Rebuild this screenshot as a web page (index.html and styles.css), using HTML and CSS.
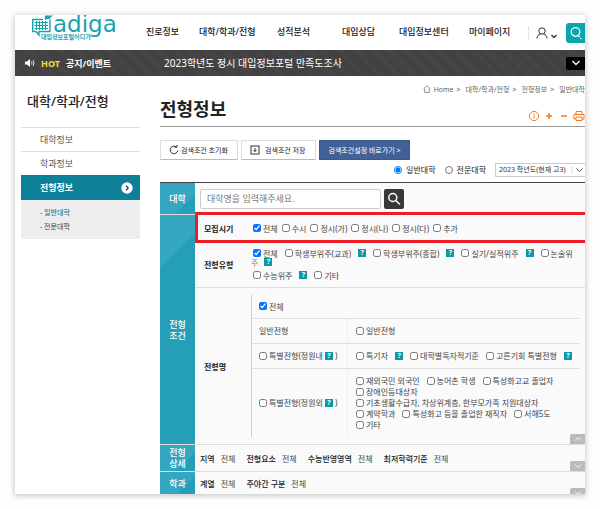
FILE: index.html
```html
<!DOCTYPE html>
<html lang="ko">
<head>
  <meta charset="UTF-8">
  <meta name="viewport" content="width=device-width, initial-scale=1">
  <title>전형정보</title>
  <link rel="stylesheet" href="styles.css">
</head>
<body>
  <div class="page">
    <header class="header">
      <a href="#" class="logo">
        <svg class="logo-mark" viewBox="0 0 22 22" width="22" height="22" fill="none" stroke="#1aa3ad">
          <path d="M12 4.500H1.700V16.500h3.300l3 3.500v-3.500h11V4.500" stroke-width="1.400"/>
          <path d="M3.500 7.500h13.500M3.500 10.500h13.500M3.500 13.500h13.500M5.500 6v9M8.500 6v9M11.500 6v9M14.500 6v9" stroke-width="1"/>
          <path d="M14.500 5V1" stroke-width="1.300"/>
          <path d="M14 .5h8l-2 1.500-1.500 2H14z" fill="#1aa3ad" stroke="none"/>
        </svg>
        <span class="logo-name">adiga</span>
        <span class="logo-sub">대입정보포털어디가</span>
      </a>
      <nav class="menu">
        <a href="#">진로정보</a>
        <a href="#">대학/학과/전형</a>
        <a href="#">성적분석</a>
        <a href="#">대입상담</a>
        <a href="#">대입정보센터</a>
        <a href="#">마이페이지</a>
      </nav>
      <div class="user">
        <button type="button" class="user-btn" aria-label="회원">
          <svg viewBox="0 0 22 12" width="22" height="12" fill="none" stroke="#333">
            <circle cx="6" cy="4" r="3.200"/>
            <path d="M1 11.500c0-2.500 1.500-4 3.500-4.500M11 11.500c0-2.500-1.500-4-3.500-4.500"/>
            <path d="M15.500 8l2.500 2.500L20.500 8" stroke-width="1.300"/>
          </svg>
        </button>
        <button type="button" class="top-search" aria-label="통합검색">
          <svg viewBox="0 0 14 14" width="14" height="14" fill="none" stroke="#fff" stroke-width="1.200">
            <circle cx="6.500" cy="6" r="4.300"/>
            <path d="M8.500 9l2 2"/>
            <path d="M12 12v1" stroke-width="1.500"/>
          </svg>
        </button>
      </div>
    </header>

    <div class="notice">
      <div class="notice-title">
        <svg viewBox="0 0 10 8" width="10" height="8" fill="none" stroke="#fff">
          <path d="M0 2.500h2L5 0v8L2 5.500H0z" fill="#fff" stroke="none"/>
          <path d="M6.500 2.300q1 1.700 0 3.400M8 1q2 3 0 6" stroke-width=".8"/>
        </svg>
        <em>HOT</em>
        <strong>공지/이벤트</strong>
      </div>
      <a href="#" class="notice-text">2023학년도 정시 대입정보포털 만족도조사</a>
      <button type="button" class="notice-more" aria-label="펼치기">
        <svg viewBox="0 0 10 6" width="10" height="6" fill="none" stroke="#fff" stroke-width="1.300"><path d="M1.500 1L5 4.500 8.500 1"/></svg>
      </button>
    </div>

    <div class="container">
      <aside class="side">
        <h2>대학/학과/전형</h2>
        <a href="#" class="side-item">대학정보</a>
        <a href="#" class="side-item">학과정보</a>
        <a href="#" class="side-item active">전형정보
          <svg viewBox="0 0 12 12" width="12" height="12"><circle cx="6" cy="6" r="5.700" fill="#fff"/><path d="M5 3.800L7.200 6 5 8.200" fill="none" stroke="#246" stroke-width="1.300"/></svg>
        </a>
        <div class="side-sub">
          <a href="#" class="on">- 일반대학</a>
          <a href="#">- 전문대학</a>
        </div>
      </aside>

      <main class="content">
        <div class="path">
          <svg viewBox="0 0 8 8" width="8" height="8" fill="none" stroke="#777" stroke-width=".8"><path d="M.5 4L4 .7 7.500 4M1.700 3.500v4h4.600v-4"/></svg>
          <a href="#">Home</a><span>&gt;</span>
          <a href="#">대학/학과/전형</a><span>&gt;</span>
          <a href="#">전형정보</a><span>&gt;</span>
          <a href="#">일반대학</a>
        </div>
        <div class="title">
          <h1>전형정보</h1>
          <div class="tools">
            <button type="button" aria-label="도움말"><svg viewBox="0 0 12 12" width="12" height="12" fill="none" stroke="#f47920"><circle cx="6" cy="6" r="4.600"/><path d="M6 5v3.500M6 3v1.200"/></svg></button>
            <button type="button" aria-label="확대"><svg viewBox="0 0 12 12" width="12" height="12" stroke="#f47920" stroke-width="1.500"><path d="M3 6h6M6 3v6"/></svg></button>
            <button type="button" aria-label="축소"><svg viewBox="0 0 12 12" width="12" height="12" stroke="#f47920" stroke-width="1.500"><path d="M3 6h6"/></svg></button>
            <button type="button" aria-label="인쇄"><svg viewBox="0 0 12 12" width="12" height="12" fill="none" stroke="#f47920"><path d="M3 4V1.500h6V4M3 9H1V4.500h10V9H9M3 7h6v3.500H3z"/></svg></button>
          </div>
        </div>

        <div class="buttons">
          <button type="button" class="btn">
            <svg viewBox="0 0 10 10" width="10" height="10" fill="none" stroke="#333"><path d="M7.500 2A3.800 3.800 0 1 0 8.800 5.500M5.500 2.200H8V0"/></svg>
            검색조건 초기화
          </button>
          <button type="button" class="btn btn-save">
            <svg viewBox="0 0 10 10" width="10" height="10" fill="none" stroke="#333"><rect x="1" y="1" width="8" height="8"/><path d="M5 3v3.500M3.500 5L5 6.500 6.500 5"/></svg>
            검색조건 저장
          </button>
          <button type="button" class="btn btn-blue">검색조건설정 바로가기 &gt;</button>
        </div>

        <div class="kind">
          <label><input type="radio" name="kind" checked> 일반대학</label>
          <label><input type="radio" name="kind"> 전문대학</label>
          <div class="year">
            <select aria-label="학년도"><option>2023 학년도(현재 고3)</option></select>
            <svg viewBox="0 0 14 8" width="14" height="8" fill="none" stroke="#555"><path d="M1 0v8" stroke="#ddd"/><path d="M5.500 2.500L8.500 5.500l3-3"/></svg>
          </div>
        </div>

        <form class="search">
          <section class="group group-univ">
            <h3>대학</h3>
            <div class="group-body univ">
              <input type="text" aria-label="대학명" placeholder="대학명을 입력해주세요.">
              <button type="button" aria-label="검색">
                <svg viewBox="0 0 14 14" width="14" height="14" fill="none" stroke="#fff" stroke-width="1.500"><circle cx="5.800" cy="5.500" r="4"/><path d="M8.700 8.500L13 12.500"/></svg>
              </button>
            </div>
          </section>

          <section class="group group-cond">
            <h3>전형<br>조건</h3>
            <div class="group-body">
              <div class="field field-marked">
                <h4>모집시기</h4>
                <div class="checks">
                  <label><input type="checkbox" checked>전체</label>
                  <label><input type="checkbox">수시</label>
                  <label><input type="checkbox">정시(가)</label>
                  <label><input type="checkbox">정시(나)</label>
                  <label><input type="checkbox">정시(다)</label>
                  <label><input type="checkbox">추가</label>
                </div>
              </div>
              <div class="field field-type">
                <h4>전형유형</h4>
                <div class="type-list">
                  <div class="checks loose">
                    <label><input type="checkbox" checked>전체</label>
                    <label><input type="checkbox">학생부위주(교과)</label><a href="#" class="help">?</a>
                    <label><input type="checkbox">학생부위주(종합)</label><a href="#" class="help">?</a>
                    <label><input type="checkbox">실기/실적위주</label><a href="#" class="help">?</a>
                    <label><input type="checkbox" id="essay">논술위</label>
                  </div>
                  <div class="rest"><label for="essay">주</label><a href="#" class="help">?</a></div>
                  <div class="checks loose">
                    <label><input type="checkbox">수능위주</label><a href="#" class="help">?</a>
                    <label><input type="checkbox">기타</label>
                  </div>
                </div>
              </div>
              <div class="field field-name">
                <h4>전형명</h4>
                <table class="names">
                  <tr class="all">
                    <td colspan="2"><div class="checks"><label><input type="checkbox" checked>전체</label></div></td>
                  </tr>
                  <tr>
                    <td class="plain">일반전형</td>
                    <td><div class="checks"><label><input type="checkbox">일반전형</label></div></td>
                  </tr>
                  <tr>
                    <td><div class="checks"><label><input type="checkbox">특별전형(정원내<span class="help">?</span>)</label></div></td>
                    <td>
                      <div class="checks loose">
                        <label><input type="checkbox">특기자</label><a href="#" class="help">?</a>
                        <label><input type="checkbox">대학별독자적기준</label>
                        <label><input type="checkbox">고른기회 특별전형</label><a href="#" class="help">?</a>
                      </div>
                    </td>
                  </tr>
                  <tr class="extra">
                    <td><div class="checks"><label><input type="checkbox">특별전형(정원외<span class="help">?</span>)</label></div></td>
                    <td>
                      <div class="checks loose">
                        <label><input type="checkbox">재외국민 외국인</label>
                        <label><input type="checkbox">농어촌 학생</label>
                        <label><input type="checkbox">특성화고교 졸업자</label>
                      </div>
                      <div class="checks"><label><input type="checkbox">장애인등대상자</label></div>
                      <div class="checks"><label><input type="checkbox">기초생활수급자, 차상위계층, 한부모가족 지원대상자</label></div>
                      <div class="checks loose">
                        <label><input type="checkbox">계약학과</label>
                        <label><input type="checkbox">특성화고 등을 졸업한 재직자</label>
                        <label><input type="checkbox">서해5도</label>
                      </div>
                      <div class="checks"><label><input type="checkbox">기타</label></div>
                    </td>
                  </tr>
                </table>
              </div>
            </div>
            <button type="button" class="fold" aria-label="접기"><svg viewBox="0 0 10 6" width="10" height="6" fill="none" stroke="#fff"><path d="M2 4.500l3-3 3 3"/></svg></button>
          </section>

          <section class="group group-detail">
            <h3>전형<br>상세</h3>
            <dl class="group-body summary">
              <div><dt>지역</dt><dd>전체</dd></div>
              <div><dt>전형요소</dt><dd>전체</dd></div>
              <div><dt>수능반영영역</dt><dd>전체</dd></div>
              <div><dt>최저학력기준</dt><dd>전체</dd></div>
            </dl>
            <button type="button" class="fold" aria-label="펼치기"><svg viewBox="0 0 10 6" width="10" height="6" fill="none" stroke="#fff"><path d="M2 1.500l3 3 3-3"/></svg></button>
          </section>

          <section class="group group-major">
            <h3>학과</h3>
            <dl class="group-body summary">
              <div><dt>계열</dt><dd>전체</dd></div>
              <div><dt>주야간 구분</dt><dd>전체</dd></div>
            </dl>
            <button type="button" class="fold" aria-label="펼치기"><svg viewBox="0 0 10 6" width="10" height="6" fill="none" stroke="#fff"><path d="M2 1.500l3 3 3-3"/></svg></button>
          </section>
        </form>
      </main>
    </div>
  </div>
</body>
</html>
```
FILE: styles.css
```css
* {
  box-sizing: border-box;
}
body {
  margin: 0;
  padding: 15px;
  background: #fdfdfd;
  font-family: "Noto Sans", "Noto Sans CJK KR", sans-serif;
  font-size: 8px;
  line-height: 11px;
  color: #444;
}
a {
  color: inherit;
  text-decoration: none;
}
button, input, select {
  font-family: inherit;
  margin: 0;
}
button {
  padding: 0;
  border: none;
  background: none;
  cursor: pointer;
}
svg {
  display: block;
  flex: none;
}
h1, h2, h3, h4, dl, dd {
  margin: 0;
}
.page {
  background: #fff;
  border-radius: 3px 3px 0 0;
  box-shadow: 0 1px 5px 1px rgba(0,0,0,0.2);
  overflow: hidden;
}

/* header */
.header {
  display: flex;
  height: 35px;
  white-space: nowrap;
}
.logo {
  display: grid;
  grid-template-columns: 22px 1fr;
  grid-template-rows: 19px 7px;
  width: 131px;
  padding-left: 16px;
  color: #1aa3ad;
}
.logo-mark {
  grid-column: 1;
  grid-row: 1 / 3;
}
.logo-name {
  grid-column: 2;
  grid-row: 1;
  font-family: "DejaVu Sans", sans-serif;
  font-size: 23px;
  line-height: 19px;
}
.logo-sub {
  grid-column: 1 / 3;
  grid-row: 2;
  padding-left: 10px;
  font-size: 6px;
  line-height: 7px;
  font-weight: bold;
}
.menu {
  flex: 1;
  display: grid;
  grid-template-columns: 53px 78px 65px 57px 70px 1fr;
  align-items: center;
  font-size: 9px;
  font-weight: 500;
  color: #222;
  padding-bottom: 3px;
}
.user {
  display: flex;
  align-items: center;
  gap: 8px;
}
.user-btn {
  border-left: 1px dotted #ccc;
  padding-left: 7px;
}
.top-search {
  display: grid;
  place-items: center;
  width: 19px;
  height: 20px;
  background: #0aa5ad;
  border-radius: 3px 0 0 3px;
}
.notice {
  display: flex;
  align-items: center;
  height: 26px;
  background: repeating-linear-gradient(45deg, #484848 0 1px, #3e3e3e 1px 2px);
  color: #fff;
  font-size: 10px;
}
.notice-title {
  display: flex;
  align-items: center;
  gap: 6px;
  width: 149px;
  padding-left: 10px;
  font-size: 9px;
}
.notice-title em {
  font-style: normal;
  font-weight: bold;
  color: #f4dc32;
}
.notice-text {
  flex: 1;
}
.notice-more {
  display: grid;
  place-items: center;
  width: 19px;
  height: 13px;
  background: #000;
  border-radius: 2px 0 0 2px;
}

/* side menu */
.container {
  display: flex;
}
.side {
  width: 119px;
  margin: 0 20px 0 6px;
}
.side h2 {
  height: 51px;
  padding: 17px 0 0 6px;
  font-size: 13px;
  line-height: 16px;
  font-weight: 500;
  color: #222;
}
.side-item {
  display: flex;
  align-items: center;
  justify-content: space-between;
  height: 24px;
  padding: 0 7px 0 19px;
  border-top: 1px solid #ddd;
  font-size: 9px;
  color: #555;
}
.side-item.active {
  height: 25px;
  border-top: none;
  background: #0e8199;
  color: #fff;
  font-weight: bold;
}
.side-sub {
  display: grid;
  gap: 3px;
  padding: 7px 0 7px 19px;
  background: #ededed;
  font-size: 7px;
}
.side-sub .on {
  color: #0e8199;
  font-weight: 500;
}

/* content */
.content {
  flex: 1;
  min-width: 0;
}
.path {
  display: flex;
  justify-content: flex-end;
  align-items: center;
  gap: 3px;
  height: 22px;
  padding-top: 4px;
  font-size: 7px;
  color: #666;
  white-space: nowrap;
}
.path span {
  margin-right: 2px;
}
.title {
  display: flex;
  justify-content: space-between;
  height: 29px;
  border-bottom: 1px solid #999;
}
h1 {
  font-size: 18px;
  line-height: 22px;
  font-weight: bold;
  color: #222;
}
.tools {
  display: flex;
  align-items: flex-end;
  gap: 3px;
  padding-bottom: 4px;
}
.buttons {
  display: flex;
  gap: 3px;
  padding-top: 13px;
}
.btn {
  display: flex;
  align-items: center;
  gap: 2px;
  width: 78px;
  height: 20px;
  padding-left: 8px;
  border: 1px solid #ddd;
  border-bottom-color: #bbb;
  font-size: 7px;
  color: #222;
  white-space: nowrap;
}
.btn-save {
  width: 75px;
  gap: 5px;
}
.btn-blue {
  justify-content: center;
  width: 91px;
  padding: 0;
  border-color: #3a5888;
  background: #426198;
  color: #fff;
}
.kind {
  display: flex;
  justify-content: flex-end;
  align-items: center;
  height: 22px;
  gap: 9px;
  padding-bottom: 3px;
  color: #222;
}
.kind label {
  display: flex;
  align-items: center;
  gap: 4px;
}
.kind input {
  width: 8px;
  height: 8px;
}
.year {
  position: relative;
}
.year select {
  appearance: none;
  display: block;
  width: 90px;
  height: 14px;
  padding: 0 16px 0 3px;
  border: 1px solid #ccc;
  border-right: none;
  border-radius: 0;
  background: #fff;
  font-size: 7px;
  color: #333;
}
.year svg {
  position: absolute;
  right: 0;
  top: 3px;
  pointer-events: none;
}

/* search form */
.search {
  border-top: 1px solid #444;
}
.group {
  position: relative;
  display: flex;
  border-bottom: 1px solid #ddd;
  background: #fafafa;
}
.group h3 {
  display: grid;
  place-content: center;
  width: 35px;
  font-size: 9px;
  line-height: 11px;
  font-weight: 500;
  color: #fff;
  background: linear-gradient(135deg, #35a6bf 0 70%, #259eb7 70%);
}
.group-cond h3 {
  background: linear-gradient(135deg, #35a6bf 0 38px, #259eb7 38px);
}
.group-body {
  flex: 1;
  min-width: 0;
}
.group-univ {
  height: 32px;
}
.univ {
  display: flex;
  align-items: center;
  gap: 3px;
  padding-left: 5px;
}
.univ input {
  width: 181px;
  height: 20px;
  padding: 0 6px;
  border: 1px solid #ccc;
  border-radius: 2px;
  background: #fff;
  font-size: 9px;
}
.univ input::placeholder {
  color: #777;
}
.univ button {
  display: grid;
  place-items: center;
  width: 20px;
  height: 20px;
  background: #383838;
  border-radius: 2px;
}
.field {
  position: relative;
  display: flex;
  align-items: center;
}
.field h4 {
  width: 56px;
  padding-left: 9px;
  font-size: 8px;
  font-weight: bold;
  color: #222;
}
.field-marked {
  height: 26px;
}
/* highlight frame */
.field-marked::after {
  content: "";
  position: absolute;
  inset: -3px 0 -2px;
  border: 3px solid #ee1c25;
  border-right: none;
  pointer-events: none;
}
.field-marked .checks,
.type-list .checks {
  padding-left: 2px;
}
.field-type {
  height: 47px;
  border-bottom: 1px solid #ddd;
}
.type-list .checks + .rest {
  margin-top: -2px;
}
.rest {
  display: flex;
  align-items: center;
  gap: 6px;
  margin-bottom: 2px;
  color: #888;
}
.checks {
  display: flex;
  align-items: center;
  gap: 4px;
  white-space: nowrap;
}
.checks.loose {
  gap: 7px;
}
.checks label {
  display: flex;
  align-items: center;
}
.checks input {
  width: 8px;
  height: 8px;
  margin-right: 2px;
}
.help {
  display: block;
  width: 8px;
  height: 8px;
  background: #0b9aa5;
  color: #fff;
  font-size: 7px;
  line-height: 8px;
  font-weight: bold;
  text-align: center;
}
.checks label .help {
  margin: 0 2px;
}
.field-name {
  padding: 7px 5px 7px 0;
}
.names {
  flex: 1;
  border-collapse: collapse;
  border-left: 1px solid #ccc;
}
.names td {
  height: 25px;
  padding: 0 0 0 8px;
  border-bottom: 1px solid #ddd;
}
.names td:first-child {
  width: 96px;
  padding-left: 7px;
}
.names td + td {
  border-left: 1px solid #eee;
}
.names .all td {
  height: 23px;
}
.names .plain {
  padding-left: 6px;
}
.names .extra td {
  height: 69px;
  border-bottom: none;
}
.summary {
  display: flex;
  align-items: center;
  gap: 11px;
  padding-left: 5px;
}
.summary div {
  display: flex;
  gap: 6px;
}
.summary dt {
  font-weight: 500;
  color: #222;
}
.group-detail {
  height: 27px;
}
.group-major {
  height: 22px;
  border-bottom: none;
}
.fold {
  position: absolute;
  right: 0;
  bottom: 0;
  display: grid;
  place-items: center;
  width: 15px;
  height: 10px;
  background: #bbb;
  border-radius: 2px 0 0 0;
}
.group-major .fold {
  bottom: -4px;
}
```
